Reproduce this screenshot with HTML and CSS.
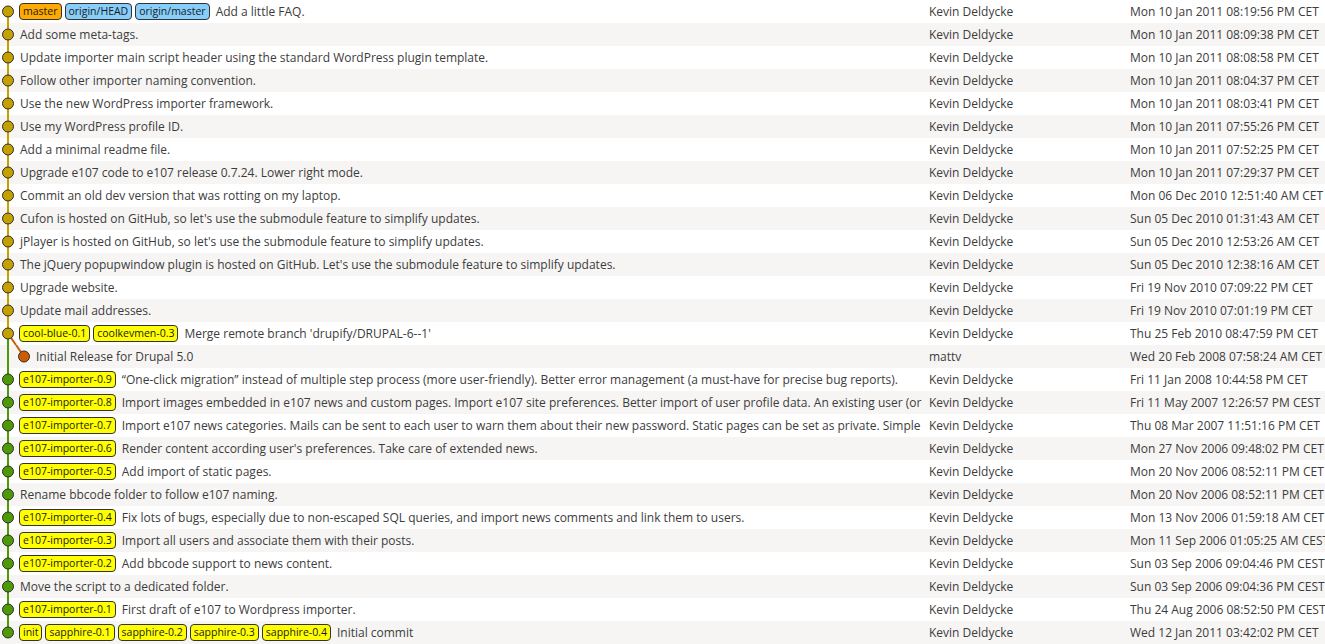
FILE: index.html
```html
<!DOCTYPE html>
<html>
<head>
<meta charset="utf-8">
<link rel="stylesheet" href="styles.css">
</head>
<body>
<div class="log">
  <div class="row">
    <div class="msg"><svg class="g" width="20" height="23"><line class="ly" x1="8" y1="11.5" x2="8" y2="23"/><circle class="cy" cx="8" cy="11.5" r="5.5"/></svg><span class="refs"><span class="ref head">master</span><span class="ref remote">origin/HEAD</span><span class="ref remote">origin/master</span></span><span class="text">Add a little FAQ.</span></div>
    <div class="author">Kevin Deldycke</div><div class="date">Mon 10 Jan 2011 08:19:56 PM CET</div>
  </div>
  <div class="row">
    <div class="msg"><svg class="g" width="20" height="23"><line class="ly" x1="8" y1="0" x2="8" y2="23"/><circle class="cy" cx="8" cy="11.5" r="5.5"/></svg><span class="text">Add some meta-tags.</span></div>
    <div class="author">Kevin Deldycke</div><div class="date">Mon 10 Jan 2011 08:09:38 PM CET</div>
  </div>
  <div class="row">
    <div class="msg"><svg class="g" width="20" height="23"><line class="ly" x1="8" y1="0" x2="8" y2="23"/><circle class="cy" cx="8" cy="11.5" r="5.5"/></svg><span class="text">Update importer main script header using the standard WordPress plugin template.</span></div>
    <div class="author">Kevin Deldycke</div><div class="date">Mon 10 Jan 2011 08:08:58 PM CET</div>
  </div>
  <div class="row">
    <div class="msg"><svg class="g" width="20" height="23"><line class="ly" x1="8" y1="0" x2="8" y2="23"/><circle class="cy" cx="8" cy="11.5" r="5.5"/></svg><span class="text">Follow other importer naming convention.</span></div>
    <div class="author">Kevin Deldycke</div><div class="date">Mon 10 Jan 2011 08:04:37 PM CET</div>
  </div>
  <div class="row">
    <div class="msg"><svg class="g" width="20" height="23"><line class="ly" x1="8" y1="0" x2="8" y2="23"/><circle class="cy" cx="8" cy="11.5" r="5.5"/></svg><span class="text">Use the new WordPress importer framework.</span></div>
    <div class="author">Kevin Deldycke</div><div class="date">Mon 10 Jan 2011 08:03:41 PM CET</div>
  </div>
  <div class="row">
    <div class="msg"><svg class="g" width="20" height="23"><line class="ly" x1="8" y1="0" x2="8" y2="23"/><circle class="cy" cx="8" cy="11.5" r="5.5"/></svg><span class="text">Use my WordPress profile ID.</span></div>
    <div class="author">Kevin Deldycke</div><div class="date">Mon 10 Jan 2011 07:55:26 PM CET</div>
  </div>
  <div class="row">
    <div class="msg"><svg class="g" width="20" height="23"><line class="ly" x1="8" y1="0" x2="8" y2="23"/><circle class="cy" cx="8" cy="11.5" r="5.5"/></svg><span class="text">Add a minimal readme file.</span></div>
    <div class="author">Kevin Deldycke</div><div class="date">Mon 10 Jan 2011 07:52:25 PM CET</div>
  </div>
  <div class="row">
    <div class="msg"><svg class="g" width="20" height="23"><line class="ly" x1="8" y1="0" x2="8" y2="23"/><circle class="cy" cx="8" cy="11.5" r="5.5"/></svg><span class="text">Upgrade e107 code to e107 release 0.7.24. Lower right mode.</span></div>
    <div class="author">Kevin Deldycke</div><div class="date">Mon 10 Jan 2011 07:29:37 PM CET</div>
  </div>
  <div class="row">
    <div class="msg"><svg class="g" width="20" height="23"><line class="ly" x1="8" y1="0" x2="8" y2="23"/><circle class="cy" cx="8" cy="11.5" r="5.5"/></svg><span class="text">Commit an old dev version that was rotting on my laptop.</span></div>
    <div class="author">Kevin Deldycke</div><div class="date">Mon 06 Dec 2010 12:51:40 AM CET</div>
  </div>
  <div class="row">
    <div class="msg"><svg class="g" width="20" height="23"><line class="ly" x1="8" y1="0" x2="8" y2="23"/><circle class="cy" cx="8" cy="11.5" r="5.5"/></svg><span class="text">Cufon is hosted on GitHub, so let's use the submodule feature to simplify updates.</span></div>
    <div class="author">Kevin Deldycke</div><div class="date">Sun 05 Dec 2010 01:31:43 AM CET</div>
  </div>
  <div class="row">
    <div class="msg"><svg class="g" width="20" height="23"><line class="ly" x1="8" y1="0" x2="8" y2="23"/><circle class="cy" cx="8" cy="11.5" r="5.5"/></svg><span class="text">jPlayer is hosted on GitHub, so let's use the submodule feature to simplify updates.</span></div>
    <div class="author">Kevin Deldycke</div><div class="date">Sun 05 Dec 2010 12:53:26 AM CET</div>
  </div>
  <div class="row">
    <div class="msg"><svg class="g" width="20" height="23"><line class="ly" x1="8" y1="0" x2="8" y2="23"/><circle class="cy" cx="8" cy="11.5" r="5.5"/></svg><span class="text">The jQuery popupwindow plugin is hosted on GitHub. Let's use the submodule feature to simplify updates.</span></div>
    <div class="author">Kevin Deldycke</div><div class="date">Sun 05 Dec 2010 12:38:16 AM CET</div>
  </div>
  <div class="row">
    <div class="msg"><svg class="g" width="20" height="23"><line class="ly" x1="8" y1="0" x2="8" y2="23"/><circle class="cy" cx="8" cy="11.5" r="5.5"/></svg><span class="text">Upgrade website.</span></div>
    <div class="author">Kevin Deldycke</div><div class="date">Fri 19 Nov 2010 07:09:22 PM CET</div>
  </div>
  <div class="row">
    <div class="msg"><svg class="g" width="20" height="23"><line class="ly" x1="8" y1="0" x2="8" y2="23"/><circle class="cy" cx="8" cy="11.5" r="5.5"/></svg><span class="text">Update mail addresses.</span></div>
    <div class="author">Kevin Deldycke</div><div class="date">Fri 19 Nov 2010 07:01:19 PM CET</div>
  </div>
  <div class="row">
    <div class="msg"><svg class="g" width="20" height="23"><line class="ly" x1="8" y1="0" x2="8" y2="11.5"/><line class="lg" x1="8" y1="11.5" x2="8" y2="23"/><line class="lo" x1="8" y1="11.5" x2="16" y2="23"/><circle class="cy" cx="8" cy="11.5" r="5.5"/></svg><span class="refs"><span class="ref tag">cool-blue-0.1</span><span class="ref tag">coolkevmen-0.3</span></span><span class="text">Merge remote branch 'drupify/DRUPAL-6--1'</span></div>
    <div class="author">Kevin Deldycke</div><div class="date">Thu 25 Feb 2010 08:47:59 PM CET</div>
  </div>
  <div class="row">
    <div class="msg"><svg class="g" width="36" height="23"><line class="lg" x1="8" y1="0" x2="8" y2="23"/><line class="lo" x1="16" y1="0" x2="24" y2="11.5"/><circle class="co" cx="24" cy="11.5" r="5.5"/></svg><span class="text">Initial Release for Drupal 5.0</span></div>
    <div class="author">mattv</div><div class="date">Wed 20 Feb 2008 07:58:24 AM CET</div>
  </div>
  <div class="row">
    <div class="msg"><svg class="g" width="20" height="23"><line class="lg" x1="8" y1="0" x2="8" y2="23"/><circle class="cg" cx="8" cy="11.5" r="5.5"/></svg><span class="refs"><span class="ref tag">e107-importer-0.9</span></span><span class="text">“One-click migration” instead of multiple step process (more user-friendly). Better error management (a must-have for precise bug reports).</span></div>
    <div class="author">Kevin Deldycke</div><div class="date">Fri 11 Jan 2008 10:44:58 PM CET</div>
  </div>
  <div class="row">
    <div class="msg"><svg class="g" width="20" height="23"><line class="lg" x1="8" y1="0" x2="8" y2="23"/><circle class="cg" cx="8" cy="11.5" r="5.5"/></svg><span class="refs"><span class="ref tag">e107-importer-0.8</span></span><span class="text">Import images embedded in e107 news and custom pages. Import e107 site preferences. Better import of user profile data. An existing user (or a new one) can be used.</span></div>
    <div class="author">Kevin Deldycke</div><div class="date">Fri 11 May 2007 12:26:57 PM CEST</div>
  </div>
  <div class="row">
    <div class="msg"><svg class="g" width="20" height="23"><line class="lg" x1="8" y1="0" x2="8" y2="23"/><circle class="cg" cx="8" cy="11.5" r="5.5"/></svg><span class="refs"><span class="ref tag">e107-importer-0.7</span></span><span class="text">Import e107 news categories. Mails can be sent to each user to warn them about their new password. Static pages can be set as private. Simple redirection.</span></div>
    <div class="author">Kevin Deldycke</div><div class="date">Thu 08 Mar 2007 11:51:16 PM CET</div>
  </div>
  <div class="row">
    <div class="msg"><svg class="g" width="20" height="23"><line class="lg" x1="8" y1="0" x2="8" y2="23"/><circle class="cg" cx="8" cy="11.5" r="5.5"/></svg><span class="refs"><span class="ref tag">e107-importer-0.6</span></span><span class="text">Render content according user's preferences. Take care of extended news.</span></div>
    <div class="author">Kevin Deldycke</div><div class="date">Mon 27 Nov 2006 09:48:02 PM CET</div>
  </div>
  <div class="row">
    <div class="msg"><svg class="g" width="20" height="23"><line class="lg" x1="8" y1="0" x2="8" y2="23"/><circle class="cg" cx="8" cy="11.5" r="5.5"/></svg><span class="refs"><span class="ref tag">e107-importer-0.5</span></span><span class="text">Add import of static pages.</span></div>
    <div class="author">Kevin Deldycke</div><div class="date">Mon 20 Nov 2006 08:52:11 PM CET</div>
  </div>
  <div class="row">
    <div class="msg"><svg class="g" width="20" height="23"><line class="lg" x1="8" y1="0" x2="8" y2="23"/><circle class="cg" cx="8" cy="11.5" r="5.5"/></svg><span class="text">Rename bbcode folder to follow e107 naming.</span></div>
    <div class="author">Kevin Deldycke</div><div class="date">Mon 20 Nov 2006 08:52:11 PM CET</div>
  </div>
  <div class="row">
    <div class="msg"><svg class="g" width="20" height="23"><line class="lg" x1="8" y1="0" x2="8" y2="23"/><circle class="cg" cx="8" cy="11.5" r="5.5"/></svg><span class="refs"><span class="ref tag">e107-importer-0.4</span></span><span class="text">Fix lots of bugs, especially due to non-escaped SQL queries, and import news comments and link them to users.</span></div>
    <div class="author">Kevin Deldycke</div><div class="date">Mon 13 Nov 2006 01:59:18 AM CET</div>
  </div>
  <div class="row">
    <div class="msg"><svg class="g" width="20" height="23"><line class="lg" x1="8" y1="0" x2="8" y2="23"/><circle class="cg" cx="8" cy="11.5" r="5.5"/></svg><span class="refs"><span class="ref tag">e107-importer-0.3</span></span><span class="text">Import all users and associate them with their posts.</span></div>
    <div class="author">Kevin Deldycke</div><div class="date">Mon 11 Sep 2006 01:05:25 AM CEST</div>
  </div>
  <div class="row">
    <div class="msg"><svg class="g" width="20" height="23"><line class="lg" x1="8" y1="0" x2="8" y2="23"/><circle class="cg" cx="8" cy="11.5" r="5.5"/></svg><span class="refs"><span class="ref tag">e107-importer-0.2</span></span><span class="text">Add bbcode support to news content.</span></div>
    <div class="author">Kevin Deldycke</div><div class="date">Sun 03 Sep 2006 09:04:46 PM CEST</div>
  </div>
  <div class="row">
    <div class="msg"><svg class="g" width="20" height="23"><line class="lg" x1="8" y1="0" x2="8" y2="23"/><circle class="cg" cx="8" cy="11.5" r="5.5"/></svg><span class="text">Move the script to a dedicated folder.</span></div>
    <div class="author">Kevin Deldycke</div><div class="date">Sun 03 Sep 2006 09:04:36 PM CEST</div>
  </div>
  <div class="row">
    <div class="msg"><svg class="g" width="20" height="23"><line class="lg" x1="8" y1="0" x2="8" y2="23"/><circle class="cg" cx="8" cy="11.5" r="5.5"/></svg><span class="refs"><span class="ref tag">e107-importer-0.1</span></span><span class="text">First draft of e107 to Wordpress importer.</span></div>
    <div class="author">Kevin Deldycke</div><div class="date">Thu 24 Aug 2006 08:52:50 PM CEST</div>
  </div>
  <div class="row">
    <div class="msg"><svg class="g" width="20" height="23"><line class="lg" x1="8" y1="0" x2="8" y2="11.5"/><circle class="cg" cx="8" cy="11.5" r="5.5"/></svg><span class="refs"><span class="ref tag">init</span><span class="ref tag">sapphire-0.1</span><span class="ref tag">sapphire-0.2</span><span class="ref tag">sapphire-0.3</span><span class="ref tag">sapphire-0.4</span></span><span class="text">Initial commit</span></div>
    <div class="author">Kevin Deldycke</div><div class="date">Wed 12 Jan 2011 03:42:02 PM CET</div>
  </div>
</div>
</body>
</html>
```
FILE: styles.css
```css
html, body {
  margin: 0;
  padding: 0;
  background: #ffffff;
}
body {
  font-family: "Open Sans", "DejaVu Sans", sans-serif;
  font-size: 12px;
  color: #3c3c3c;
  overflow: hidden;
}
.log {
  display: flex;
  flex-direction: column;
}
.row {
  display: grid;
  grid-template-columns: 924px 206px 195px;
  height: 23px;
  line-height: 23px;
  white-space: nowrap;
}
.row:nth-child(even) {
  background: #f6f5f4;
}
.msg {
  display: flex;
  align-items: center;
  overflow: hidden;
}
.author {
  padding-left: 5px;
  overflow: hidden;
}
.date {
  overflow: hidden;
}
.g {
  flex: none;
  display: block;
  overflow: visible;
}
.g line {
  stroke-width: 2;
}
.ly { stroke: #c4a000; }
.lg { stroke: #4e9a06; }
.lo { stroke: #ce5c00; }
.g circle {
  stroke: #2e2e2e;
  stroke-width: 1;
}
.cy { fill: #c4a000; }
.cg { fill: #4e9a06; }
.co { fill: #ce5c00; }
.refs {
  display: flex;
  gap: 3px;
  margin-left: -1px;
  margin-right: 6px;
  flex: none;
}
.ref {
  box-sizing: border-box;
  height: 17px;
  line-height: 15px;
  padding: 0 3px;
  border: 1px solid #333;
  border-radius: 4px;
  font-size: 10.5px;
  color: #1a1a1a;
}
.head { background: #ffaa00; }
.remote { background: #87cefa; }
.tag { background: #ffff00; }
.text {
  flex: none;
}
```
